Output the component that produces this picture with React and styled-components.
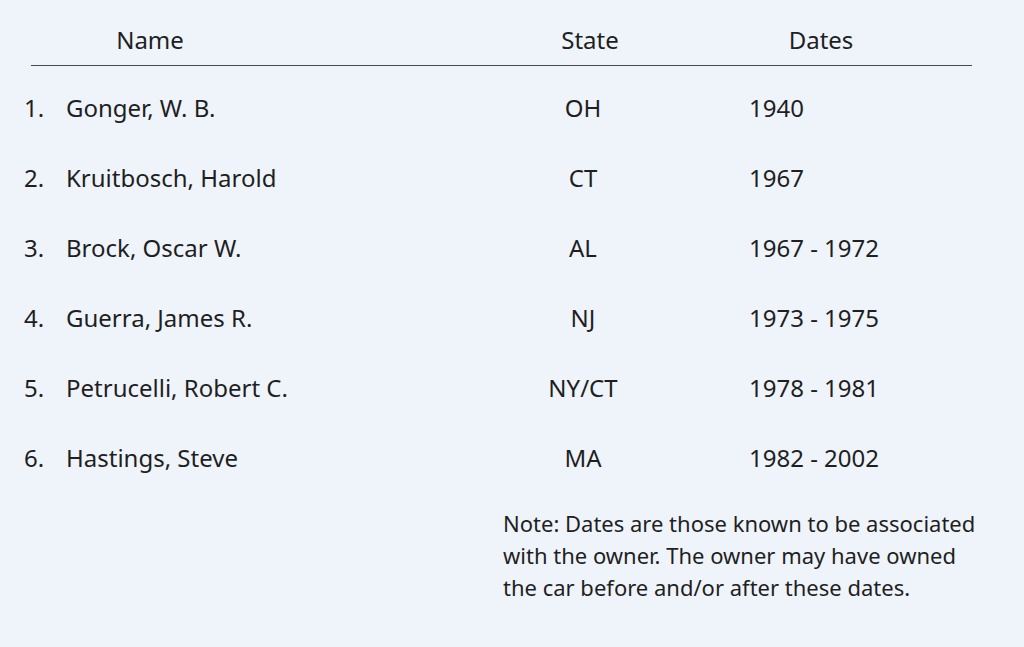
import styled, { createGlobalStyle } from "styled-components";

const GlobalStyle = createGlobalStyle`
  html, body {
    margin: 0;
    padding: 0;
    background: #eff4fb;
  }
  body {
    font-family: "Noto Sans", "Open Sans", sans-serif;
    color: #1f1f1f;
  }
`

const Page = styled.main`
  width: 1024px;
  min-height: 647px;
  background: #eff4fb;
`

const HeaderRow = styled.div`
  display: grid;
  grid-template-columns: 238px 231px 180px 282px;
  margin-left: 31px;
  width: 941px;
  padding: 25px 0 10px;
  border-bottom: 1px solid #4a4a4a;
  font-size: 24px;
  line-height: 30px;
`

const HeadCell = styled.div`
  text-align: center;
`

const Rows = styled.ol`
  list-style: none;
  margin: 7px 0 0;
  padding: 0 0 0 24px;
`

const Row = styled.li`
  display: grid;
  grid-template-columns: 42px 427px 180px 1fr;
  align-items: center;
  height: 70px;
  font-size: 24px;
  line-height: 30px;
`

const Num = styled.span``

const StateCell = styled.span`
  text-align: center;
`

const DateCell = styled.span`
  padding-left: 76px;
`

const Note = styled.p`
  margin: 14px 0 0 503px;
  width: 480px;
  font-size: 22px;
  line-height: 32px;
`

const owners = [
  { name: "Gonger, W. B.", state: "OH", dates: "1940" },
  { name: "Kruitbosch, Harold", state: "CT", dates: "1967" },
  { name: "Brock, Oscar W.", state: "AL", dates: "1967 - 1972" },
  { name: "Guerra, James R.", state: "NJ", dates: "1973 - 1975" },
  { name: "Petrucelli, Robert C.", state: "NY/CT", dates: "1978 - 1981" },
  { name: "Hastings, Steve", state: "MA", dates: "1982 - 2002" },
]

const App = () => {
  return (
    <Page>
      <GlobalStyle />
      <HeaderRow>
        <HeadCell>Name</HeadCell>
        <span />
        <HeadCell>State</HeadCell>
        <HeadCell>Dates</HeadCell>
      </HeaderRow>
      <Rows>
        {owners.map((o, i) => (
          <Row key={o.name}>
            <Num>{i + 1}.</Num>
            <span>{o.name}</span>
            <StateCell>{o.state}</StateCell>
            <DateCell>{o.dates}</DateCell>
          </Row>
        ))}
      </Rows>
      <Note>
        Note: Dates are those known to be associated with the owner. The owner
        may have owned the car before and/or after these dates.
      </Note>
    </Page>
  );
}

export default App;
